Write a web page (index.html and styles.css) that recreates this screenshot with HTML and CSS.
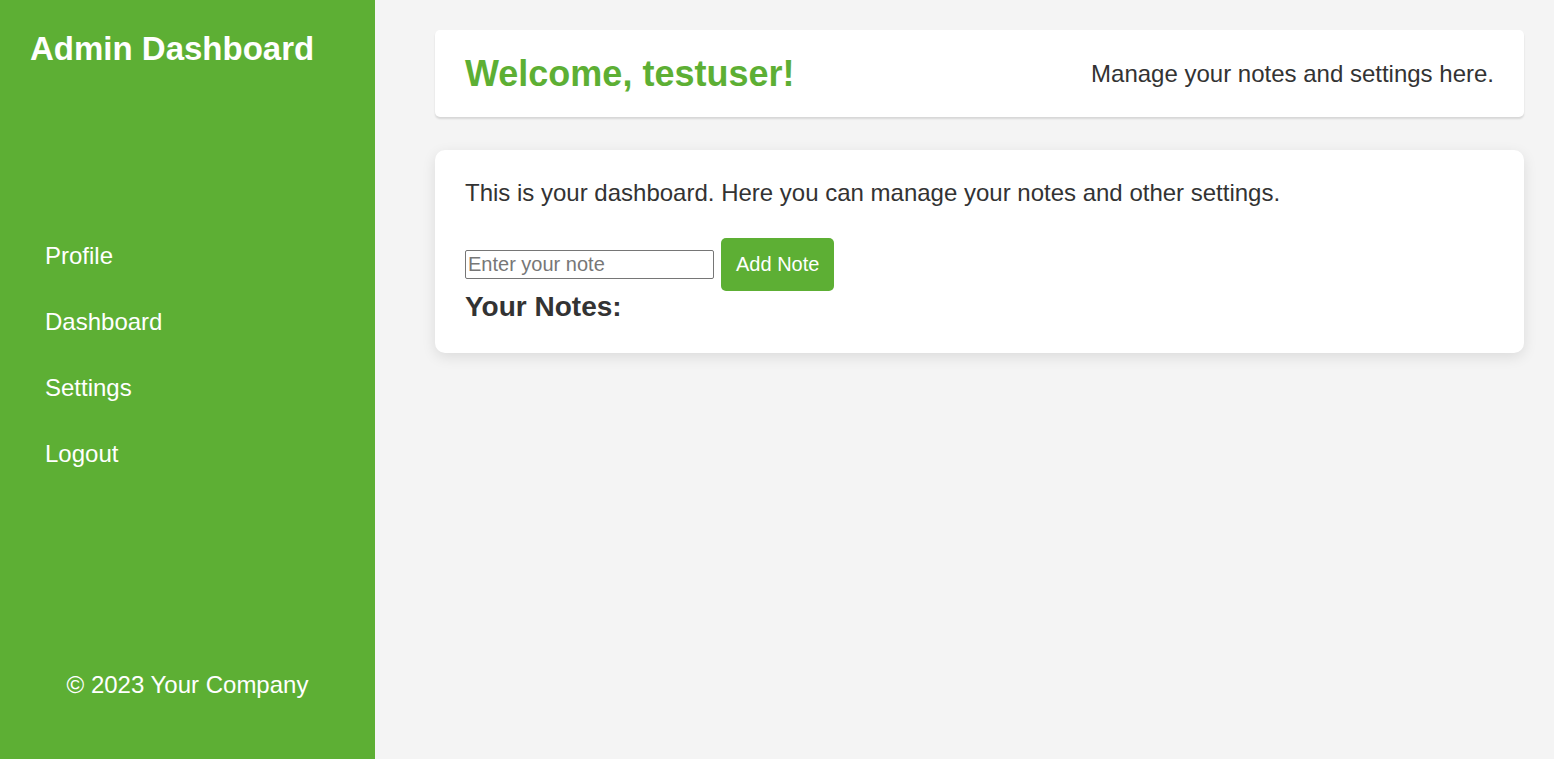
FILE: index.html
```html
<!DOCTYPE html>
<html lang="en">
<head>
<meta charset="utf-8">
<title>Admin Dashboard</title>
<link rel="stylesheet" href="styles.css">
</head>
<body>
<div class="layout">
  <aside class="sidebar">
    <h2 class="brand">Admin Dashboard</h2>
    <nav class="nav">
      <a href="#" class="nav-link">Profile</a>
      <a href="#" class="nav-link">Dashboard</a>
      <a href="#" class="nav-link">Settings</a>
      <a href="#" class="nav-link">Logout</a>
    </nav>
    <footer class="side-footer">© 2023 Your Company</footer>
  </aside>
  <main class="main">
    <header class="topbar">
      <h1 class="welcome">Welcome, testuser!</h1>
      <p class="tagline">Manage your notes and settings here.</p>
    </header>
    <section class="card">
      <p class="intro">This is your dashboard. Here you can manage your notes and other settings.</p>
      <form class="note-form">
        <input class="note-input" type="text" placeholder="Enter your note">
        <button class="note-btn" type="button">Add Note</button>
      </form>
      <h3 class="notes-title">Your Notes:</h3>
    </section>
  </main>
</div>
</body>
</html>
```

FILE: styles.css
```css
* { box-sizing: border-box; }
html, body { margin: 0; height: 100%; }
body {
  font-family: "Liberation Sans", Arial, sans-serif;
  background: #f4f4f4;
  color: #333;
}
.layout {
  display: flex;
  height: 759px;
}
.sidebar {
  width: 375px;
  flex-shrink: 0;
  background: #5daf34;
  color: #fff;
  display: flex;
  flex-direction: column;
  padding: 30px 30px;
}
.brand {
  margin: 0;
  font-size: 33px;
  font-weight: bold;
  line-height: 38px;
}
.nav {
  display: flex;
  flex-direction: column;
  margin-top: 155px;
}
.nav-link {
  color: #fff;
  text-decoration: none;
  font-size: 24px;
  line-height: 28px;
  padding: 19px 15px;
}
.side-footer {
  margin-top: auto;
  text-align: center;
  font-size: 24px;
  line-height: 28px;
  padding-bottom: 30px;
}
.main {
  flex: 1;
  padding: 30px 30px 30px 60px;
  display: flex;
  flex-direction: column;
  gap: 33px;
}
.topbar {
  background: #fff;
  border-radius: 5px;
  box-shadow: 0 2px 2px rgba(0,0,0,0.12);
  height: 87px;
  padding: 0 30px;
  display: flex;
  align-items: center;
  justify-content: space-between;
}
.welcome {
  margin: 0;
  color: #5daf34;
  font-size: 36px;
  font-weight: bold;
}
.tagline {
  margin: 0;
  font-size: 24px;
}
.card {
  background: #fff;
  border-radius: 10px;
  box-shadow: 0 4px 14px rgba(0,0,0,0.1);
  padding: 28px 30px 30px;
}
.intro {
  margin: 0 0 30px;
  font-size: 24px;
  line-height: 30px;
}
.note-form {
  display: flex;
  align-items: center;
  gap: 7px;
}
.note-input {
  width: 249px;
  height: 29px;
  font-family: "Liberation Sans", Arial, sans-serif;
  font-size: 20px;
  padding: 1px 2px;
  border: 1px solid #767676;
  border-radius: 2px;
  color: #333;
}
.note-input::placeholder { color: #777; }
.note-btn {
  background: #5daf34;
  color: #fff;
  border: none;
  border-radius: 5px;
  font-family: "Liberation Sans", Arial, sans-serif;
  font-size: 20px;
  height: 53px;
  padding: 0 15px;
}
.notes-title {
  margin: 0;
  font-size: 28px;
  font-weight: bold;
  line-height: 32px;
}
```
